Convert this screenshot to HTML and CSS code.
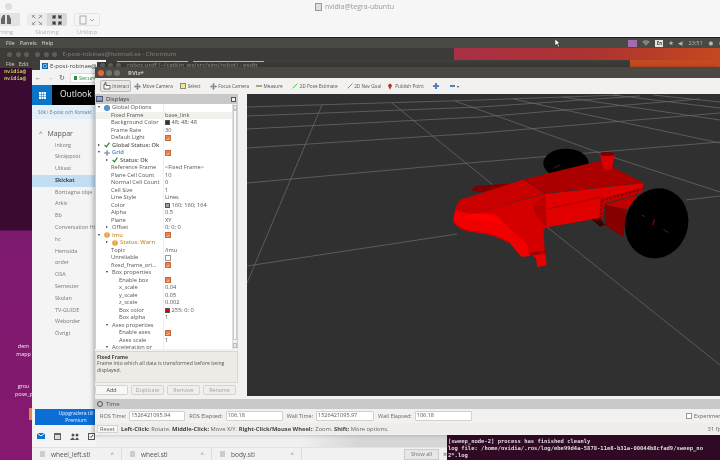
FILE: index.html
```html
<!DOCTYPE html>
<html lang="sv">
<head>
<meta charset="utf-8">
<title>RViz</title>
<link rel="stylesheet" href="styles.css">
</head>
<body>
<svg class="defs" width="0" height="0">
  <symbol id="check" viewBox="0 0 10 10"><path d="M1 5l3 3 5-7" fill="none" stroke="#1e8a2a" stroke-width="2"/></symbol>
  <symbol id="tick" viewBox="0 0 10 10"><path d="M2 5l2 2.500 4-5" fill="none" stroke="#fff" stroke-width="1.400"/></symbol>
  <symbol id="warn" viewBox="0 0 10 10"><circle cx="5" cy="5" r="4.600" fill="#ee9a2e"/><path d="M5 2v3.600M5 7v1.200" stroke="#fff" stroke-width="1.200"/></symbol>
  <symbol id="cross" viewBox="0 0 10 10"><path d="M5 0l2 2H6v2h2V3l2 2-2 2V6H6v2h1l-2 2-2-2h1V6H2v1L0 5l2-2v1h2V2H3z" fill="#7d8b92"/></symbol>
  <symbol id="arrow" viewBox="0 0 10 10"><path d="M1 9L9 1" stroke="#35c42d" stroke-width="1.600"/></symbol>
</svg>
<div class="desk">
  <header class="macbar">
    <div class="maclight"></div>
    <div class="ribbon">
      <div class="rgroup first">
        <div class="rbtns"><span class="rbtn solo"><svg width="12" height="11" viewBox="0 0 12 11"><path d="M1 10V5l2-4h2v9zM11 10V5L9 1H7v9z" fill="#666"/></svg></span></div>
        <span class="rlabel">rning</span>
      </div>
      <div class="rgroup">
        <div class="rbtns">
          <span class="rbtn"><svg width="10" height="10" viewBox="0 0 10 10"><path d="M0 3V0h3M7 0h3v3M10 7v3H7M3 10H0V7M1 1l2.500 2.500M9 1L6.500 3.500M9 9L6.500 6.500M1 9l2.500-2.500" fill="none" stroke="#888"/></svg></span>
          <span class="rbtn on"><svg width="10" height="10" viewBox="0 0 10 10"><path d="M3 0v3H0M7 0v3h3M10 7H7v3M3 10V7H0M3 3L.5.5M7 3L9.500.5M7 7l2.500 2.500M3 7L.5 9.500" fill="none" stroke="#333" stroke-width="1.200"/></svg></span>
        </div>
        <span class="rlabel">Skalning</span>
      </div>
      <div class="rgroup">
        <div class="rbtns"><span class="rbtn wide"><svg width="16" height="10" viewBox="0 0 16 10"><rect x="1" y="1" width="6" height="8" fill="none" stroke="#aaa"/><path d="M11 4l2 2 2-2" fill="none" stroke="#aaa"/></svg></span></div>
        <span class="rlabel">Urklipp</span>
      </div>
    </div>
    <div class="mactitle"><svg width="7" height="8" viewBox="0 0 7 8"><rect x=".5" y=".5" width="6" height="7" fill="#ddd" stroke="#999"/></svg><span>nvidia@tegra-ubuntu</span></div>
  </header>

  <div class="ubar">
    <span class="umenu">File</span><span class="umenu">Panels</span><span class="umenu">Help</span>
    <span class="uright">
      <span class="ucast"></span>
      <svg width="8" height="6" viewBox="0 0 8 6"><path d="M0 1.500Q4-1 8 1.500L4 6z" fill="#85837d"/></svg>
      <span class="ulang">En</span>
      <span class="uglyph">✱</span>
      <span class="uglyph">◀)</span>
      <span class="utime">23:51</span>
      <span class="uglyph big">✹</span>
      <span class="uglyph">n</span>
    </span>
  </div>

  <div class="term-left">
    <div class="wintitle"><span class="dot"></span><span class="dot"></span><span class="dot"></span></div>
    <div class="tmenu"><span>File</span><span>Edit</span></div>
    <pre class="tbody">nvidia@
nvidia@</pre>
  </div>

  <div class="grad-band"></div>
  <div class="grad-band two"></div>

  <div class="chromium">
    <div class="wintitle"><span class="dot"></span><span class="dot"></span><span class="dot"></span><span class="chtitle">E-post-robinae@hotmail.se - Chromium</span></div>
    <div class="tabs">
      <span class="tab"><span class="ol">O</span>E-post-robinae@</span>
      <span class="stripe"></span><span class="stripe"></span>
    </div>
    <div class="omni"><span class="nav">←</span><span class="nav dim">→</span><span class="nav">↻</span><span class="addr"><i class="lock"></i>Secure</span></div>
    <div class="olhead"><span class="waffle"><svg width="7" height="7" viewBox="0 0 7 7"><path d="M0 0h2v2H0zM2.500 0h2v2h-2zM5 0h2v2H5zM0 2.500h2v2H0zM2.500 2.500h2v2h-2zM5 2.500h2v2H5zM0 5h2v2H0zM2.500 5h2v2h-2zM5 5h2v2H5z" fill="#fff"/></svg></span><span class="oltitle">Outlook E</span></div>
    <div class="olsearch">Sök i E-post och Kontakt</div>
    <div class="olside">
      <div class="mappar"><span class="caret">^</span>Mappar</div>
      <ul class="folders">
        <li>Inkorg</li><li>Skräppost</li><li>Utkast</li><li class="sel">Skickat</li><li>Borttagna obje</li><li>Arkiv</li><li>Bb</li><li>Conversation His</li><li>hc</li><li>Hemsida</li><li>order</li><li>OSA</li><li>Semester</li><li>Skolan</li><li>TV-GUIDE</li><li>Weborder</li><li>Övrigt</li>
      </ul>
      <div class="upgrade">Uppgradera till<br>Premium</div>
      <div class="olicons">
        <svg width="8" height="6" viewBox="0 0 8 6"><rect width="8" height="6" fill="#0b76d0"/><path d="M0 0l4 3 4-3" fill="none" stroke="#fff"/></svg>
        <svg width="7" height="7" viewBox="0 0 7 7"><rect width="7" height="7" fill="#666"/><rect x="1" y="2" width="5" height="4" fill="#ddd"/></svg>
        <svg width="9" height="7" viewBox="0 0 9 7"><circle cx="3" cy="2" r="1.500" fill="#555"/><circle cx="7" cy="2" r="1.500" fill="#555"/><path d="M0 7q3-5 5 0zM5 7q2-5 4 0z" fill="#555"/></svg>
        <svg width="7" height="7" viewBox="0 0 7 7"><rect x=".5" y=".5" width="6" height="6" fill="none" stroke="#555"/><path d="M2 3.500l1 1 2-2.500" fill="none" stroke="#555"/></svg>
      </div>
    </div>
  </div>

  <div class="gedit"><span class="dot"></span><span class="dot"></span><span class="dot"></span><span class="gtitle">robot.urdf (~/catkin_ws/src/sim/robot) - gedit</span></div>

  <div class="desk-label one">dem<br>mapp</div>
  <div class="desk-label two">grou<br>pose_p</div>
  <div class="orange-tab"></div>

  <div class="adstrip"><svg width="5" height="6" viewBox="0 0 5 6"><path d="M.5.5L4.500 3 .5 5.500z" fill="none" stroke="#2a9fd8"/></svg></div>

  <div class="dlbar">
    <span class="dl"><i class="file"></i><span class="dlname">wheel_left.stl</span><span class="chev">^</span></span>
    <span class="dl"><i class="file"></i><span class="dlname">wheel.stl</span><span class="chev">^</span></span>
    <span class="dl"><i class="file"></i><span class="dlname">body.stl</span><span class="chev">^</span></span>
    <span class="spacer"></span>
    <span class="showall">Show all</span><span class="dlx">×</span>
  </div>

  <div class="terminal">
    <pre>[sweep_node-2] process has finished cleanly
log file: /home/nvidia/.ros/log/ebe99d4a-5878-11e8-b31a-00044b8cfad9/sweep_no
2*.log</pre>
  </div>

  <main class="rviz">
    <div class="rtitle">
      <span class="rdot close"></span><span class="rdot"></span><span class="rdot"></span>
      <span class="rname">RViz*</span>
    </div>
    <div class="rtools">
      <span class="tool active"><svg width="9" height="8" viewBox="0 0 9 8"><path d="M2 7V2.500h1V.5h1v3h4v3.500z" fill="#fff" stroke="#333" stroke-width=".7"/></svg>Interact</span>
      <span class="tool mc"><svg width="7" height="7"><use href="#cross"/></svg>Move Camera</span>
      <span class="tool sl"><i class="selbox"></i>Select</span>
      <span class="tool fc"><svg width="7" height="7"><use href="#cross"/></svg>Focus Camera</span>
      <span class="tool ms"><i class="ruler"></i>Measure</span>
      <span class="tool pe"><svg width="6" height="6"><use href="#arrow"/></svg>2D Pose Estimate</span>
      <span class="tool ng"><svg width="6" height="6"><use href="#arrow"/></svg>2D Nav Goal</span>
      <span class="tool pp"><svg width="4" height="7" viewBox="0 0 5 8"><path d="M2.500 8L.5 4a2.300 2.300 0 1 1 4 0z" fill="#b8321f"/></svg>Publish Point</span>
      <span class="tool pl"><svg width="6" height="6" viewBox="0 0 6 6"><path d="M2 0h2v2h2v2H4v2H2V4H0V2h2z" fill="#4a83c4"/></svg></span>
      <span class="tool mn"><i class="minus"></i><i class="drop"></i></span>
    </div>
    <div class="rmain">
      <aside class="displays">
        <div class="dock"><svg width="7" height="7" viewBox="0 0 7 7"><rect width="7" height="6" fill="#557"/><rect x="1" y="1" width="5" height="3.500" fill="#8ac"/></svg><span>Displays</span><i class="dockx"></i></div>
        <div class="treewrap">
          <div class="tree">
            <div class="row"><div class="n l0"><i class="ar d"></i><i class="ball"></i>Global Options</div><div class="v"></div></div>
            <div class="row hl"><div class="n l1">Fixed Frame</div><div class="v">base_link</div></div>
            <div class="row"><div class="n l1">Background Color</div><div class="v"><i class="sw dark"></i>48; 48; 48</div></div>
            <div class="row"><div class="n l1">Frame Rate</div><div class="v">30</div></div>
            <div class="row"><div class="n l1">Default Light</div><div class="v"><i class="cb"><svg width="6" height="6"><use href="#tick"/></svg></i></div></div>
            <div class="row"><div class="n l0 b"><i class="ar r"></i><svg class="ic" width="6" height="6"><use href="#check"/></svg>Global Status: Ok</div><div class="v"></div></div>
            <div class="row"><div class="n l0 b blue"><i class="ar d"></i><svg class="ic" width="6" height="6"><use href="#cross"/></svg>Grid</div><div class="v"><i class="cb"><svg width="6" height="6"><use href="#tick"/></svg></i></div></div>
            <div class="row"><div class="n l2 b"><i class="ar r"></i><svg class="ic" width="6" height="6"><use href="#check"/></svg>Status: Ok</div><div class="v"></div></div>
            <div class="row"><div class="n l1">Reference Frame</div><div class="v">&lt;Fixed Frame&gt;</div></div>
            <div class="row"><div class="n l1">Plane Cell Count</div><div class="v">10</div></div>
            <div class="row"><div class="n l1">Normal Cell Count</div><div class="v">0</div></div>
            <div class="row"><div class="n l1">Cell Size</div><div class="v">1</div></div>
            <div class="row"><div class="n l1">Line Style</div><div class="v">Lines</div></div>
            <div class="row"><div class="n l1">Color</div><div class="v"><i class="sw gray"></i>160; 160; 164</div></div>
            <div class="row"><div class="n l1">Alpha</div><div class="v">0.5</div></div>
            <div class="row"><div class="n l1">Plane</div><div class="v">XY</div></div>
            <div class="row"><div class="n l2"><i class="ar r"></i>Offset</div><div class="v">0; 0; 0</div></div>
            <div class="row"><div class="n l0 b warn"><i class="ar d"></i><svg class="ic" width="6" height="6"><use href="#warn"/></svg>Imu</div><div class="v"><i class="cb"><svg width="6" height="6"><use href="#tick"/></svg></i></div></div>
            <div class="row"><div class="n l2 b warn"><i class="ar r"></i><svg class="ic" width="6" height="6"><use href="#warn"/></svg>Status: Warn</div><div class="v"></div></div>
            <div class="row"><div class="n l1">Topic</div><div class="v">/imu</div></div>
            <div class="row"><div class="n l1">Unreliable</div><div class="v"><i class="cb off"></i></div></div>
            <div class="row"><div class="n l1">fixed_frame_ori…</div><div class="v"><i class="cb"><svg width="6" height="6"><use href="#tick"/></svg></i></div></div>
            <div class="row"><div class="n l2"><i class="ar d"></i>Box properties</div><div class="v"></div></div>
            <div class="row"><div class="n l3">Enable box</div><div class="v"><i class="cb"><svg width="6" height="6"><use href="#tick"/></svg></i></div></div>
            <div class="row"><div class="n l3">x_scale</div><div class="v">0.04</div></div>
            <div class="row"><div class="n l3">y_scale</div><div class="v">0.05</div></div>
            <div class="row"><div class="n l3">z_scale</div><div class="v">0.002</div></div>
            <div class="row"><div class="n l3">Box color</div><div class="v"><i class="sw red"></i>255; 0; 0</div></div>
            <div class="row"><div class="n l3">Box alpha</div><div class="v">1</div></div>
            <div class="row"><div class="n l2"><i class="ar d"></i>Axes properties</div><div class="v"></div></div>
            <div class="row"><div class="n l3">Enable axes</div><div class="v"><i class="cb"><svg width="6" height="6"><use href="#tick"/></svg></i></div></div>
            <div class="row"><div class="n l3">Axes scale</div><div class="v">1</div></div>
            <div class="row"><div class="n l2"><i class="ar d"></i>Acceleration pr</div><div class="v"></div></div>
          </div>
          <div class="scroll"><i class="sup"></i><i class="sthumb"></i><i class="sdn"></i></div>
        </div>
        <div class="desc"><b>Fixed Frame</b><br>Frame into which all data is transformed before being displayed.</div>
        <div class="dbtns"><span class="btn">Add</span><span class="btn dis">Duplicate</span><span class="btn dis">Remove</span><span class="btn dis">Rename</span></div>
      </aside>
      <div class="gutter"></div>
      <svg class="view" viewBox="247 94 473 302" preserveAspectRatio="none">
        <rect x="247" y="94" width="473" height="302" fill="#303030"/>
        <g class="grid">
          <path d="M247 107L480 100L620 95"/>
          <path d="M247 116L480 107L640 96"/>
          <path d="M247 129L480 117L700 99"/>
          <path d="M247 148L480 133L720 113"/>
          <path d="M247 183L480 162L720 142"/>
          <path d="M247 266L457 234M686 200L720 196"/>
          <path d="M322 105L247 283"/>
          <path d="M392 103L493 185M547 227L720 365"/>
          <path d="M455 101L600 153L720 192"/>
          <path d="M513 99L720 143"/>
          <path d="M563 97L720 120"/>
          <path d="M613 95L720 108"/>
          <path d="M653 95L720 102"/>
        </g>
        <g transform="translate(430 130) scale(.3333)">
          <ellipse cx="408" cy="100" rx="68" ry="44" fill="#000"/>
          <path d="M122 183L135 168L240 160L200 190z" fill="#7d0000"/>
          <path d="M282 148L510 92L640 158L345 190z" fill="#ab0000"/>
          <path d="M85 215Q92 205 120 200L282 148L345 190L130 252Q80 250 76 238z" fill="#c80000"/>
          <path d="M282 148L345 190L350 196" fill="none" stroke="#7d0000" stroke-width="2"/>
          <path d="M345 192L640 160L636 176L520 205L508 265L350 292z" fill="#e10000"/>
          <path d="M355 236L520 200" stroke="#9a0000" stroke-width="2"/>
          <path d="M76 238Q70 260 70 275Q80 300 130 306Q190 310 240 340L275 380L345 370L340 300L350 290L345 192L130 252Q90 252 76 238z" fill="#d40000"/>
          <path d="M70 272Q85 300 130 306Q190 312 240 340L275 380L300 378L290 340Q240 300 215 270Q200 245 150 250Q100 255 76 238z" fill="#f00000"/>
          <path d="M95 262Q130 246 170 254Q210 262 218 285L180 276Q130 266 95 262z" fill="#ff0000"/>
          <path d="M72 276Q85 298 130 303Q190 308 240 338" fill="none" stroke="#b00000" stroke-width="2"/>
          <path d="M315 220Q340 205 345 195L350 290L325 265Q305 240 315 220z" fill="#b80000"/>
          <path d="M300 370L345 365L350 405L322 412L318 385z" fill="#e60000"/>
          <path d="M298 368L345 362V370L300 378z" fill="#9a0000"/>
          <path d="M510 72H555L546 116Q530 122 520 116z" fill="#d80000"/>
          <ellipse cx="532" cy="72" rx="22" ry="6" fill="#7a0000"/>
          <path d="M510 206L640 170L636 188L525 220L516 272H508z" fill="#c40000"/>
          <path d="M516 211L634 178M515 212L511 280" fill="none" stroke="#6e0000" stroke-width="5" stroke-dasharray="6 6"/>
          <path d="M525 224L590 238L580 322L525 285z" fill="#860000"/>
          <path d="M525 224L610 198L640 205L590 238z" fill="#c00000"/>
          <path d="M485 268L510 265L525 285L510 290z" fill="#400000"/>
          <ellipse cx="680" cy="280" rx="94" ry="106" transform="rotate(18 680 280)" fill="#000"/>
          <path d="M668 285L674 268" stroke="#c00000" stroke-width="3"/>
          <path d="M700 298L715 308M635 255L645 260" stroke="#444444" stroke-width="2"/>
          <path d="M370 115L390 105" stroke="#444444" stroke-width="2"/>
        </g>
      </svg>
    </div>
    <div class="timehead"><i class="clock"></i><span>Time</span></div>
    <div class="timerow">
      <label class="tl">ROS Time:</label><span class="inp w1">1526421095.94</span>
      <label class="tl">ROS Elapsed:</label><span class="inp w2">106.18</span>
      <label class="tl">Wall Time:</label><span class="inp w3">1526421095.97</span>
      <label class="tl">Wall Elapsed:</label><span class="inp w2">106.18</span>
      <span class="exp"><i class="cb off"></i>Experimental</span>
    </div>
    <div class="statusrow">
      <span class="reset">Reset</span>
      <span class="hint"><b>Left-Click:</b> Rotate. <b>Middle-Click:</b> Move X/Y. <b>Right-Click/Mouse Wheel:</b>: Zoom. <b>Shift:</b> More options.</span>
      <span class="fps">31 fps</span>
    </div>
  </main>
  <svg class="cursor" width="6" height="8" viewBox="0 0 6 8"><path d="M0 0l5 4.500H3l1.500 3-1 .5L2 5 0 6.500z" fill="#fff" stroke="#000" stroke-width=".4"/></svg>
</div>
</body>
</html>
```
FILE: styles.css
```css
* { box-sizing: border-box; }
html, body { margin: 0; padding: 0; }
body { width: 720px; height: 460px; overflow: hidden; font-family: "Open Sans", "Noto Sans", sans-serif; }
.defs { position: absolute; }
i { display: block; font-style: normal; }
.desk { position: relative; width: 720px; height: 460px; overflow: hidden; background: linear-gradient(180deg, #3a0a30 0, #3a0a30 230px, #7d1a70 231px, #86196f 100%); filter: blur(.3px); }

/* top mac bar */
.macbar { position: absolute; left: 0; top: 0; width: 720px; height: 37px; background: #f6f6f6; border-bottom: 1px solid #fff; }
.maclight { position: absolute; left: 5px; top: 2.500px; width: 7px; height: 7px; border-radius: 50%; background: #dedede; }
.ribbon { display: flex; gap: 7px; padding-top: 13px; margin-left: -8px; }
.rgroup { display: flex; flex-direction: column; align-items: center; gap: 3px; }
.rgroup.first { width: 28px; }
.rbtns { display: flex; gap: 0; height: 13px; border-radius: 2px; overflow: hidden; }
.rbtn { display: flex; align-items: center; justify-content: center; width: 20px; height: 13px; background: #ececec; }
.rbtn.on { background: #d9d9d9; }
.rbtn.solo { width: 28px; background: #e3e3e3; }
.rbtn.wide { width: 26px; background: #f5f5f5; border: 1px solid #e4e4e4; }
.rlabel { font-size: 6px; line-height: 7px; color: #b5b5b5; }
.mactitle { position: absolute; left: 315px; top: 2px; display: flex; align-items: center; gap: 3px; font-size: 7px; line-height: 9px; color: #999; }

/* ubuntu panel */
.ubar { position: absolute; left: 0; top: 38px; width: 720px; height: 10px; padding-left: 6px; background: #4b4944; display: flex; align-items: center; gap: 5px; font-size: 5.500px; color: #d8d6d0; }
.uright { margin-left: auto; display: flex; align-items: center; gap: 5.200px; color: #bdbbb5; margin-right: -2px; }
.ucast { width: 9px; height: 7px; background: #a56bb0; }
.ulang { width: 8px; height: 7px; background: #e2e2e0; color: #444; font-size: 4.500px; line-height: 7px; text-align: center; font-weight: 700; }
.uglyph { font-size: 5px; }
.uglyph.big { font-size: 7px; }

/* left terminal */
.term-left { position: absolute; left: 0; top: 48px; width: 40px; height: 182px; background: #3a0a30; }
.wintitle { display: flex; align-items: center; gap: 3.500px; height: 12px; padding-left: 7px; background: #3c3b37; }
.dot { width: 5px; height: 5px; border-radius: 50%; background: #5f5e59; }
.tmenu { display: flex; gap: 4px; height: 8px; padding-left: 6px; background: #3c3b37; font-size: 5.500px; line-height: 8px; color: #cfcdc7; }
.tbody { margin: 0; padding: 0 0 0 4px; font: 700 5.200px/7px "DejaVu Sans Mono", monospace; color: #b5d94a; }

/* coloured title band */
.grad-band { position: absolute; left: 454px; top: 48px; width: 266px; height: 12px; background: linear-gradient(90deg, #a92f46 0, #ad342f 55%, #c5481f 100%); }
.grad-band.two { left: 630px; top: 60px; width: 90px; height: 7px; background: #c44a22; }

/* chromium window */
.chromium { position: absolute; left: 32px; top: 48px; width: 598px; height: 412px; background: linear-gradient(180deg, transparent 12px, #f0f0f0 12px); }
.chromium .wintitle { width: 422px; padding-left: 3px; }
.chtitle { margin-left: 2px; font-size: 6px; font-weight: 600; color: #77756f; }
.tabs { display: flex; align-items: flex-start; height: 10px; background: #3e3d39; }
.tab { display: flex; align-items: center; gap: 2px; width: 66px; height: 11px; margin: 0 6px 0 8px; padding-left: 2px; background: #f4f4f4; font-size: 6px; color: #444; white-space: nowrap; }
.ol { width: 6px; height: 6px; background: #0b6fbd; color: #fff; font-size: 5px; line-height: 6px; text-align: center; }
.stripe { width: 71px; height: 1px; margin: 1px 0 0 5px; background: #b8b6b0; }
.omni { display: flex; align-items: center; gap: 5px; height: 15px; padding-left: 3px; background: #f2f2f2; font-size: 7px; color: #555; }
.nav.dim { color: #bbb; }
.addr { display: flex; align-items: center; gap: 2px; width: 60px; height: 10px; padding-left: 3px; background: #fff; border: 1px solid #ddd; font-size: 5.500px; color: #2a8a3d; }
.lock { width: 3px; height: 4px; background: #2a8a3d; }
.olhead { display: flex; height: 20px; background: #000; }
.waffle { display: flex; align-items: center; justify-content: center; width: 20px; background: #0a74c9; }
.oltitle { margin-left: 8px; font-size: 8.500px; line-height: 18px; color: #eee; }
.olsearch { height: 14px; padding-left: 6px; background: #e0effa; font-size: 4.800px; line-height: 14px; color: #777; white-space: nowrap; }
.olside { width: 64px; height: 341px; background: #f4f4f4; position: relative; }
.mappar { padding: 10px 0 0 7px; display: flex; gap: 5px; font-size: 7px; line-height: 9px; color: #555; }
.caret { font-size: 6px; }
.folders { list-style: none; margin: 1.500px 0 0; padding: 0; }
.folders li { height: 11.800px; padding-left: 23px; font-size: 5.400px; line-height: 11.800px; color: #777; white-space: nowrap; overflow: hidden; }
.folders li.sel { background: #c1def2; color: #444; font-weight: 700; }
.upgrade { width: 60px; height: 16px; margin: 68.500px 0 0 3px; background: #0b6ed6; color: #e8f2ff; font-size: 5px; line-height: 7.500px; text-align: center; padding: 1px 0 0 22px; white-space: nowrap; }
.olicons { display: flex; align-items: center; gap: 9px; margin: 8px 0 0 5px; }

.gedit { position: absolute; left: 97px; top: 62px; width: 533px; height: 8px; padding-left: 3px; display: flex; align-items: flex-start; gap: 3px; background: #3c3b37; }
.gedit .dot { margin-top: 1px; }
.gtitle { margin-left: 3px; font-size: 6px; line-height: 6px; font-weight: 600; color: #85837d; }

.desk-label { position: absolute; left: 15px; width: 17px; color: #eee; font-size: 5.400px; line-height: 7.500px; text-align: center; white-space: nowrap; }
.desk-label.one { top: 343px; }
.desk-label.two { top: 383px; }
.orange-tab { position: absolute; left: 29px; top: 408px; width: 3px; height: 12px; background: #d98a4a; }

.adstrip { position: absolute; left: 300px; top: 435px; width: 147px; height: 12px; padding: 2px 0 0 91px; background: linear-gradient(90deg, #f0f0f0, #d6d6d6 40%); }

/* download bar */
.dlbar { position: absolute; left: 32px; top: 447px; width: 415px; height: 13px; background: #f1f1f1; border-top: 1px solid #e2e2e2; display: flex; align-items: center; font-size: 6.500px; color: #555; }
.dl { display: flex; align-items: center; width: 90px; height: 100%; border-right: 1px solid #ddd; padding-left: 8px; }
.file { width: 5px; height: 6px; margin-right: 6px; background: #ccc; }
.dlname { flex: 1; }
.chev { margin-right: 7px; font-size: 6px; color: #777; }
.spacer { flex: 1; }
.showall { width: 35px; height: 11px; background: #e6e6e6; border: 1px solid #ccc; text-align: center; font-size: 5.500px; line-height: 9px; color: #777; }
.dlx { width: 8px; text-align: right; font-size: 7px; }

/* terminal */
.terminal { position: absolute; left: 447px; top: 435px; width: 273px; height: 25px; background: #300a24; padding-top: 2.500px; overflow: hidden; }
.terminal pre { margin: 0; padding-left: 1px; font: 700 5.500px/7px "DejaVu Sans Mono", monospace; color: #dedede; white-space: pre; }

/* rviz window */
.rviz { position: absolute; left: 95px; top: 67px; width: 625px; height: 368px; background: #f2f1f0; display: flex; flex-direction: column; box-shadow: -2px 0 4px rgba(0,0,0,.25); }
.rtitle { display: flex; align-items: center; height: 11px; padding-left: 3px; gap: 2px; background: #4a4843; }
.rdot { width: 6px; height: 6px; border-radius: 50%; background: #74726d; }
.rdot.close { background: #e9653a; }
.rname { margin-left: 6px; font-size: 6px; font-weight: 700; color: #c9c7c1; }
.rtools { display: flex; align-items: center; height: 16px; padding-left: 5px; font-size: 4.700px; color: #555; white-space: nowrap; }
.tool { display: flex; align-items: center; gap: 1.500px; }
.tool.active { width: 31px; height: 12px; justify-content: center; border: 1px solid #bdbbb6; border-radius: 2px; background: #e9e8e6; }
.mc { margin-left: 3px; }
.sl { margin-left: 7px; gap: 2px; }
.fc { margin-left: 9px; }
.ms { margin-left: 6.500px; gap: 2px; }
.pe { margin-left: 9px; gap: 2px; }
.ng { margin-left: 9px; }
.pp { margin-left: 7px; gap: 3px; }
.pl { margin-left: 9px; }
.mn { margin-left: 11px; gap: 2px; }
.selbox { width: 6px; height: 6px; background: #f3e77e; border: 1px solid #888; }
.ruler { width: 6px; height: 2.500px; background: #b3a27a; }
.minus { width: 5px; height: 1.500px; background: #4a83c4; }
.drop { width: 0; height: 0; border: 1.500px solid transparent; border-top: 2px solid #444; margin-top: 3px; }

.rmain { display: flex; height: 302px; }
.displays { display: flex; flex-direction: column; width: 143px; }
.gutter { width: 9px; background: #f2f1f0; }
.view { display: block; width: 473px; height: 302px; }
.grid path { fill: none; stroke: #6e6e6e; stroke-width: .7; }

.dock { display: flex; align-items: center; gap: 3px; height: 10px; padding-left: 1px; background: #c9c9c9; font-size: 6px; color: #333; }
.dockx { margin-left: auto; margin-right: 2px; width: 5px; height: 5px; background: #eee; border: 1px solid #555; }
.treewrap { position: relative; height: 244.500px; overflow: hidden; background: #fff; border-left: 1px solid #cfcfcf; border-right: 1px solid #cfcfcf; display: flex; }
.tree { flex: 1; min-width: 0; }
.row { display: grid; grid-template-columns: 68px 1fr; height: 7.500px; font-size: 5.700px; line-height: 7.500px; color: #555; white-space: nowrap; }
.row.hl { background: #f3f1ee; }
.n { display: flex; align-items: center; border-right: 1px solid #f0f0f0; overflow: hidden; }
.v { display: flex; align-items: center; gap: 1.500px; padding-left: 1px; }
.l0 { padding-left: 1px; }
.l1 { padding-left: 15px; }
.l2 { padding-left: 9px; }
.l3 { padding-left: 23px; }
.b { font-weight: 600; }
.blue { color: #3d7cbc; }
.warn { color: #c9953a; }
.ar { width: 5px; height: 5px; margin-right: 2px; flex: none; position: relative; }
.ar::after { content: ""; position: absolute; left: 1px; top: 1px; border: 1.500px solid transparent; }
.ar.d::after { border-top: 2.500px solid #333; border-bottom: 0; }
.ar.r::after { border-left: 2.500px solid #333; border-right: 0; }
.ball { width: 5.500px; height: 5.500px; margin-right: 2.500px; border-radius: 50%; background: #5c8fd0; }
.ic { margin-right: 2px; flex: none; }
.cb { display: flex; width: 6px; height: 6px; background: #e8814f; border: .5px solid #c46a40; }
.cb.off { background: #fff; border: .7px solid #999; }
.sw { width: 5px; height: 5px; border: .5px solid #555; }
.sw.dark { background: #303030; }
.sw.gray { background: #a0a0a4; }
.sw.red { background: #e00000; }
.scroll { position: relative; flex: none; width: 5px; background: #f2f1f0; border-left: 1px solid #ddd; }
.sup, .sdn { position: absolute; left: 0; width: 4px; height: 5px; background: #e9e9e9; border: .5px solid #bbb; }
.sup { top: 1px; }
.sdn { bottom: 1px; }
.sthumb { position: absolute; left: 0; top: 6px; width: 4px; height: 230px; background: #f7f7f7; border: .5px solid #ccc; }
.desc { height: 32px; margin-top: 2px; padding: 2px 8px 2px 1px; background: #eeeae5; border: 1px solid #dbd8d3; font-size: 5.100px; line-height: 6.800px; color: #555; }
.desc b { color: #444; }
.dbtns { display: flex; gap: 3px; margin-top: 2px; padding-right: 2px; }
.btn { flex: 1; height: 10px; background: #f8f8f7; border: 1px solid #d5d3ce; border-radius: 1.500px; font-size: 5.400px; line-height: 8px; text-align: center; color: #444; }
.btn.dis { background: #efeeec; color: #a5a39e; }

.timehead { display: flex; align-items: center; gap: 3px; height: 10px; margin-top: 3px; padding-left: 2px; background: #c9c9c9; font-size: 6px; color: #555; }
.clock { width: 6px; height: 6px; border: 1px solid #555; border-radius: 50%; }
.timerow { display: flex; align-items: center; height: 14px; padding-left: 5px; font-size: 5.500px; color: #666; white-space: nowrap; }
.tl { margin-right: 3px; }
.inp { height: 9.500px; margin-right: 4px; padding-left: 1px; background: #fff; border: 1px solid #d2d0cb; border-radius: 1px; line-height: 7.500px; color: #555; }
.w1 { width: 56px; }
.w2 { width: 57px; }
.w3 { width: 58px; }
.exp { display: flex; align-items: center; gap: 2px; margin-left: auto; margin-right: -8px; }
.statusrow { display: flex; align-items: center; height: 11px; padding-left: 2px; background: #eeedeb; font-size: 5.800px; color: #666; white-space: nowrap; }
.reset { padding: 0 2px; height: 8px; line-height: 7px; background: #f8f8f7; border: 1px solid #d5d3ce; margin-right: 3px; }
.hint b { color: #444; }
.fps { margin-left: auto; margin-right: -4px; }
.cursor { position: absolute; left: 555px; top: 39px; }
```
